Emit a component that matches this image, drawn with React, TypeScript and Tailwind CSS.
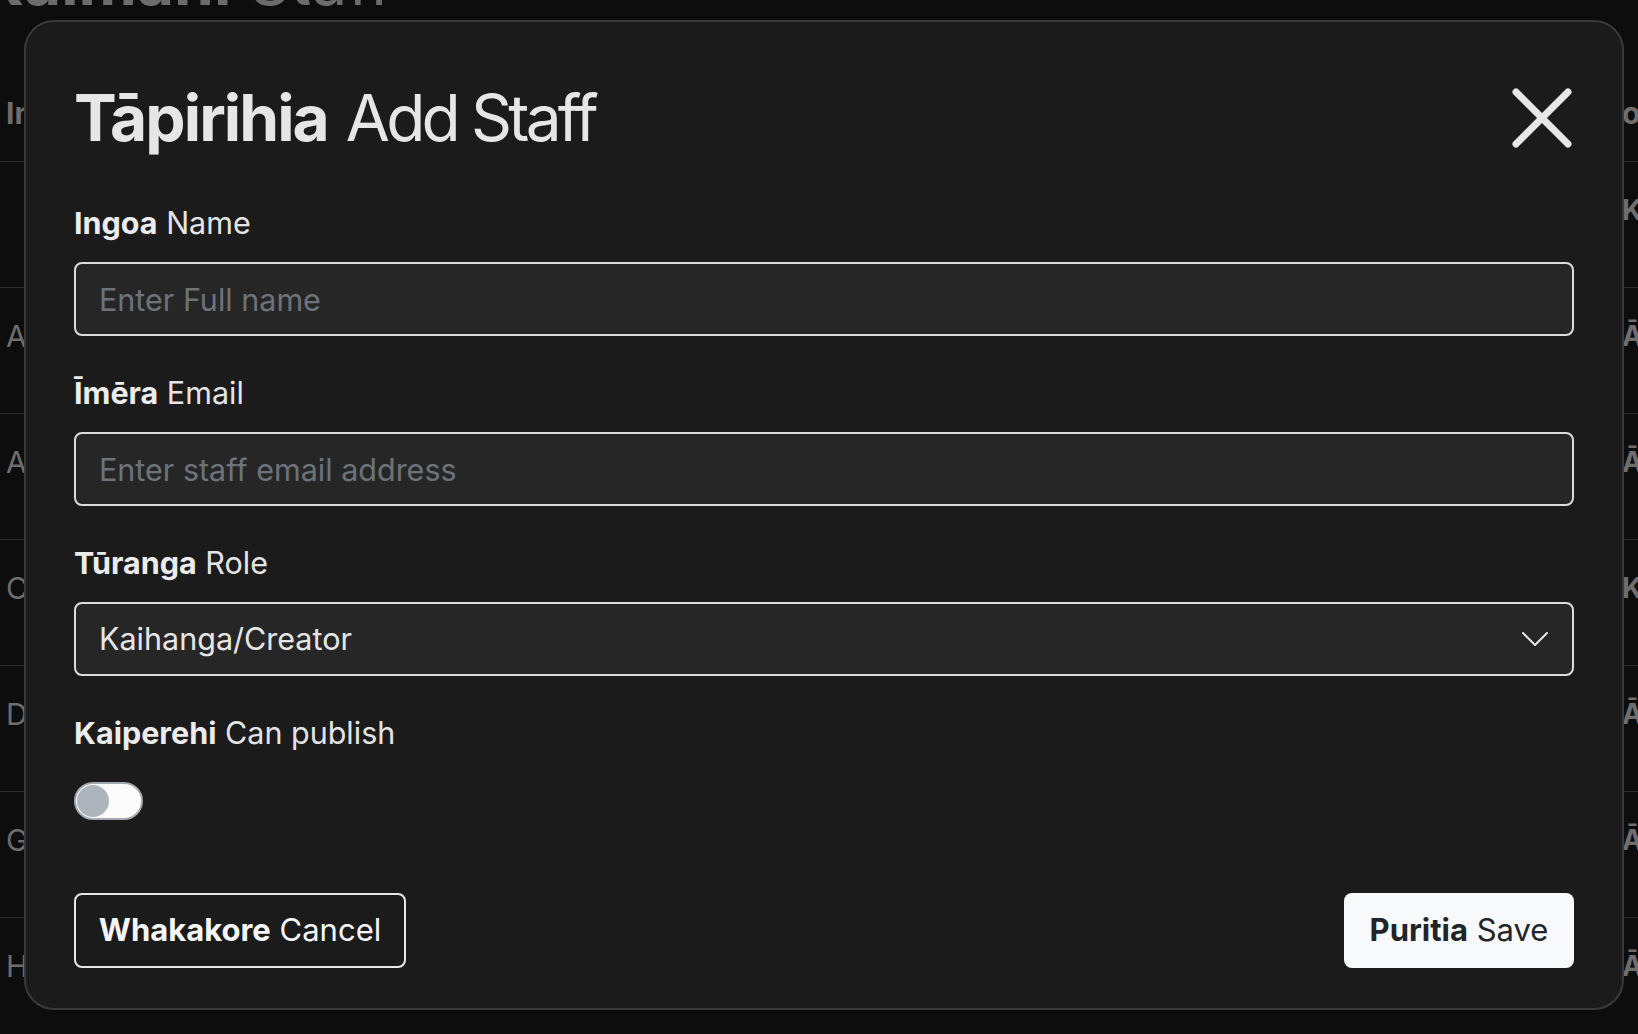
import React from 'react';

const rows = [
  { name: '', publish: 'Kāo' },
  { name: 'Aroha Ngata', publish: 'Āe' },
  { name: 'Anaru Walker', publish: 'Āe' },
  { name: 'Charlotte Moana', publish: 'Kāo' },
  { name: 'Daniel Te Huia', publish: 'Āe' },
  { name: 'Grace Parata', publish: 'Āe' },
  { name: 'Hemi Tawhiri', publish: 'Āe' },
];

function Label({ mi, en }: { mi: string; en: string }) {
  return (
    <label className="block text-[30.5px] leading-[36px] text-[#e4e4e4]">
      <span className="font-bold text-[#ececec]">{mi}</span> {en}
    </label>
  );
}

function Field({ mi, en, children }: { mi: string; en: string; children: React.ReactNode }) {
  return (
    <div className="flex flex-col gap-[21px]">
      <Label mi={mi} en={en} />
      {children}
    </div>
  );
}

const inputCls =
  'h-[74px] w-full rounded-[8px] border-2 border-[#dcdcdc] bg-[#262626] px-[23px] text-[30.5px] text-[#e6e6e6] outline-none placeholder:text-[#6c737b]';

export default function App() {
  return (
    <div className="relative h-[1034px] w-full overflow-hidden bg-[#0d0d0d] font-['Inter','Noto_Sans',sans-serif]">
      {/* page behind the dialog */}
      <h1 className="-ml-[22px] -mt-[50px] text-[64px] leading-none text-[#6c6c6c]">
        <span className="font-bold">Kaimahi</span> Staff
      </h1>
      <div className="mt-[22px]">
        <div className="flex h-[126px] items-center justify-between border-b border-[#2a2a2a] pt-[28px] text-[30px] font-bold leading-[36px] text-[#6e6e6e]">
          <span className="pl-[6px]">Ingoa</span>
          <span className="w-[16px] overflow-visible whitespace-nowrap">oc</span>
        </div>
        {rows.map((r, i) => (
          <div
            key={i}
            className="flex h-[126px] items-start justify-between border-b border-[#2a2a2a] pt-[30px] text-[30px] leading-[36px] text-[#6e6e6e]"
          >
            <span className="pl-[6px]">{r.name}</span>
            <span className="w-[16px] overflow-visible whitespace-nowrap text-[28px] font-bold">{r.publish}</span>
          </div>
        ))}
      </div>

      {/* dialog */}
      <div className="fixed left-[24px] top-[20px] w-[1600px] rounded-[30px] border-2 border-[#3a3a3a] bg-[#1b1b1b] px-[48px] pb-[40px] pt-[64px]">
        <div className="flex h-[64px] items-center justify-between">
          <h2 className="text-[64px] leading-none text-[#e6e6e6]">
            <span className="font-bold tracking-[-0.03em]">Tāpirihia</span>{' '}
            <span className="tracking-[-0.06em]">Add Staff</span>
          </h2>
          <button className="mr-[2px] flex h-[60px] w-[60px] items-center justify-center text-[#e6e6e6]">
            <svg width="60" height="60" viewBox="0 0 60 60" fill="none" stroke="currentColor" strokeWidth="7" strokeLinecap="round">
              <path d="M4 4L56 56M56 4L4 56" />
            </svg>
          </button>
        </div>

        <div className="mt-[55px] flex flex-col gap-[39px]">
          <Field mi="Ingoa" en="Name">
            <input className={inputCls} placeholder="Enter Full name" />
          </Field>
          <Field mi="Īmēra" en="Email">
            <input className={inputCls} placeholder="Enter staff email address" />
          </Field>
          <Field mi="Tūranga" en="Role">
            <div className="flex h-[74px] w-full items-center justify-between rounded-[8px] border-2 border-[#dcdcdc] bg-[#262626] pl-[23px] pr-[24px] text-[30.5px] text-[#e6e6e6]">
              <span>Kaihanga/Creator</span>
              <svg width="26" height="14" viewBox="0 0 26 14" fill="none" stroke="#e6e6e6" strokeWidth="2" strokeLinecap="round" strokeLinejoin="round">
                <path d="M1 1L13 13L25 1" />
              </svg>
            </div>
          </Field>
          <div className="flex flex-col gap-[31px]">
            <Label mi="Kaiperehi" en="Can publish" />
            <button className="flex h-[38px] w-[69px] items-center rounded-full border-2 border-[#a3a9b1] bg-[#fbfbfc] px-[1px]">
              <span className="h-[32px] w-[32px] rounded-full bg-[#adb4bc]" />
            </button>
          </div>
        </div>

        <div className="mt-[73px] flex items-center justify-between">
          <button className="flex h-[75px] w-[332px] items-center justify-center rounded-[8px] border-2 border-[#e8e8e8] text-[31px] text-[#f5f6f7]">
            <span className="font-bold">Whakakore</span>&nbsp;Cancel
          </button>
          <button className="flex h-[75px] w-[230px] items-center justify-center rounded-[8px] bg-[#f8f9fa] text-[31px] text-[#212529]">
            <span className="font-bold">Puritia</span>&nbsp;Save
          </button>
        </div>
      </div>
    </div>
  );
}
